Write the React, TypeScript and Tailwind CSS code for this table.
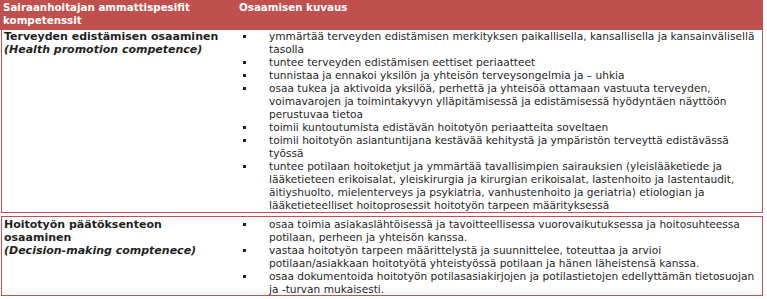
import React from 'react';

interface Competence {
  title: string;
  english: string;
  items: string[];
}

const competences: Competence[] = [
  {
    title: 'Terveyden edistämisen osaaminen',
    english: '(Health promotion competence)',
    items: [
      'ymmärtää terveyden edistämisen merkityksen paikallisella, kansallisella ja kansainvälisellä tasolla',
      'tuntee terveyden edistämisen eettiset periaatteet',
      'tunnistaa ja ennakoi yksilön ja yhteisön terveysongelmia ja – uhkia',
      'osaa tukea ja aktivoida yksilöä, perhettä ja yhteisöä ottamaan vastuuta terveyden, voimavarojen ja toimintakyvyn ylläpitämisessä ja edistämisessä hyödyntäen näyttöön perustuvaa tietoa',
      'toimii kuntoutumista edistävän hoitotyön periaatteita soveltaen',
      'toimii hoitotyön asiantuntijana kestävää kehitystä ja ympäristön terveyttä edistävässä työssä',
      'tuntee potilaan hoitoketjut ja ymmärtää tavallisimpien sairauksien (yleislääketiede ja lääketieteen erikoisalat, yleiskirurgia ja kirurgian erikoisalat, lastenhoito ja lastentaudit, äitiyshuolto, mielenterveys ja psykiatria, vanhustenhoito ja geriatria) etiologian ja lääketieteelliset hoitoprosessit hoitotyön tarpeen määrityksessä',
    ],
  },
  {
    title: 'Hoitotyön päätöksenteon osaaminen',
    english: '(Decision-making comptenece)',
    items: [
      'osaa toimia asiakaslähtöisessä ja tavoitteellisessa vuorovaikutuksessa ja hoitosuhteessa potilaan, perheen ja yhteisön kanssa.',
      'vastaa hoitotyön tarpeen määrittelystä ja suunnittelee, toteuttaa ja arvioi potilaan/asiakkaan hoitotyötä yhteistyössä potilaan ja hänen läheistensä kanssa.',
      'osaa dokumentoida hoitotyön potilasasiakirjojen ja potilastietojen edellyttämän tietosuojan ja \u2011turvan mukaisesti.',
    ],
  },
];

const App: React.FC = () => {
  return (
    <div className="w-[767px] h-[299px] bg-white text-[#1f1f1f]" style={{ fontFamily: '"DejaVu Sans", Verdana, sans-serif' }}>
      <div className="w-[763px]">
        {/* header */}
        <div className="grid grid-cols-[237px_1fr] bg-[#c0504d] text-white font-bold text-[10.3px] leading-[13px] h-[30px] pt-[1px]">
          <div className="pl-[3px]">
            Sairaanhoitajan ammattispesifit
            <br />
            kompetenssit
          </div>
          <div className="pl-[2px]">Osaamisen kuvaus</div>
        </div>

        {competences.map((c, idx) => (
          <div
            key={c.title}
            className={`grid grid-cols-[237px_1fr] ml-[1px] border-x border-b border-[#c0504d] ${idx === 0 ? 'h-[183px]' : 'mt-[3px] border-t h-[80px] pt-[1px]'}`}
          >
            <div className="pl-[2px] text-[11px] leading-[13px] font-bold w-[225px]">
              <div>{c.title}</div>
              <div className="italic">{c.english}</div>
            </div>
            <ul className="text-[10.6px] leading-[13px] pr-[3px]">
              {c.items.map((item, i) => (
                <li key={i} className="flex">
                  <span className="w-[30px] shrink-0 flex pt-[5px] pl-[4px]">
                    <span className="block w-[3px] h-[3px] bg-[#1f1f1f]" />
                  </span>
                  <span>{item}</span>
                </li>
              ))}
            </ul>
          </div>
        ))}
      </div>
    </div>
  );
};

export default App;
